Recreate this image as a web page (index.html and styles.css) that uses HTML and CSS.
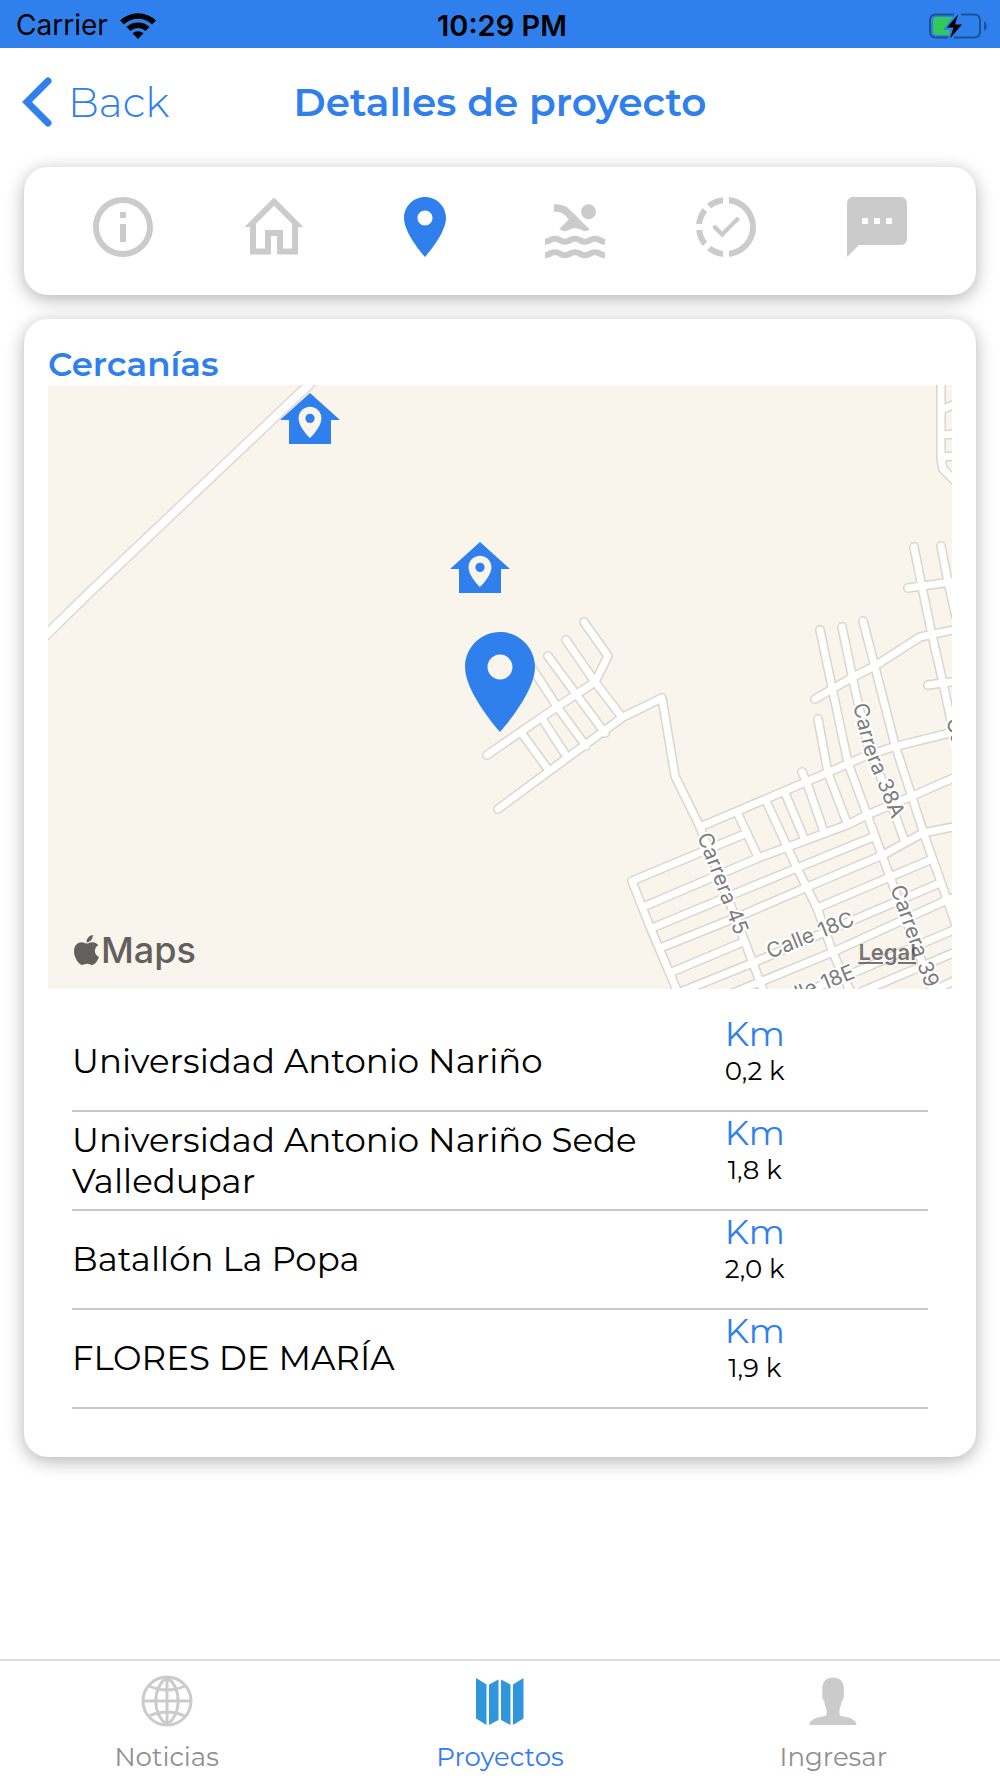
FILE: index.html
```html
<!DOCTYPE html>
<html lang="es">
<head>
<meta charset="utf-8">
<meta name="viewport" content="width=device-width, initial-scale=1">
<title>Detalles de proyecto</title>
<link rel="stylesheet" href="styles.css">
</head>
<body>
<div class="status">
  <div class="status-carrier">
    <span>Carrier</span>
    <svg width="36" height="28" viewBox="0 0 36 28" aria-hidden="true">
      <path d="M0 8.500A26 26 0 0 1 36 8.500L32 12.500A20 20 0 0 0 4 12.500Z"/>
      <path d="M6.500 15A17 17 0 0 1 29.500 15L25.500 19A11 11 0 0 0 10.500 19Z"/>
      <path d="M12.500 21.300A8.500 8.500 0 0 1 23.500 21.300L18 27Z"/>
    </svg>
  </div>
  <time class="status-time">10:29 PM</time>
  <svg class="status-battery" width="60" height="28" viewBox="0 0 60 28" aria-hidden="true">
    <path class="battery-shell" d="M26 2.500H8Q2 2.500 2 8.500V19.500Q2 25.500 8 25.500H20M33 2.500H46Q52 2.500 52 8.500V19.500Q52 25.500 46 25.500H26"/>
    <path class="battery-shell-fill" d="M56 9Q59 11 59 14T56 19Z"/>
    <path class="battery-level" d="M9 5H25L15 18H22L21 23H9Q5 23 5 19V9Q5 5 9 5Z"/>
    <path d="M30 2.500L19 15.500H25.500L22 26.500L34 12.500H27Z"/>
  </svg>
</div>

<header class="header">
  <button class="back" type="button">
    <svg width="30" height="50" viewBox="0 0 30 50" aria-hidden="true"><path d="M26 4L5 25L26 46"/></svg>
    <span>Back</span>
  </button>
  <h1 class="title">Detalles de proyecto</h1>
</header>

<main class="content">
  <nav class="card sections" aria-label="Secciones">
    <button class="section" type="button" aria-label="Información">
      <svg viewBox="0 0 24 24"><path d="M11 7h2v2h-2zm0 4h2v6h-2zm1-9C6.480 2 2 6.480 2 12s4.480 10 10 10 10-4.480 10-10S17.520 2 12 2zm0 18c-4.410 0-8-3.590-8-8s3.590-8 8-8 8 3.590 8 8-3.590 8-8 8z"/></svg>
    </button>
    <button class="section" type="button" aria-label="Vivienda">
      <svg viewBox="0 0 24 24"><path fill-rule="evenodd" d="M12 2.200L21.800 12H20V21.200H13V15H11V21.200H4V12H2.200ZM9 19.200V13H15V19.200H18V10.900L12 4.900L6 10.900V19.200Z"/></svg>
    </button>
    <button class="section is-active" type="button" aria-label="Ubicación">
      <svg viewBox="0 0 24 24"><path d="M12 2C8.130 2 5 5.130 5 9c0 5.250 7 13 7 13s7-7.750 7-13c0-3.870-3.130-7-7-7zm0 9.500c-1.380 0-2.500-1.120-2.500-2.500s1.120-2.500 2.500-2.500 2.500 1.120 2.500 2.500-1.120 2.500-2.500 2.500z"/></svg>
    </button>
    <button class="section" type="button" aria-label="Zonas comunes">
      <svg viewBox="0 0 24 24"><g transform="translate(0 1.400)"><path d="M22 21c-1.110 0-1.730-.37-2.180-.64-.37-.22-.6-.36-1.150-.36-.56 0-.78.13-1.150.36-.46.27-1.070.64-2.180.64s-1.730-.37-2.180-.64c-.37-.22-.6-.36-1.150-.36-.56 0-.78.13-1.150.36-.46.27-1.080.64-2.190.64-1.110 0-1.730-.37-2.180-.64-.37-.23-.6-.36-1.150-.36s-.78.13-1.150.36c-.46.27-1.080.64-2.190.64v-2c.56 0 .78-.13 1.150-.36.46-.27 1.080-.64 2.190-.64s1.730.37 2.180.64c.37.23.59.36 1.150.36.56 0 .78-.13 1.150-.36.46-.27 1.080-.64 2.190-.64 1.110 0 1.730.37 2.180.64.37.22.6.36 1.150.36s.78-.13 1.150-.36c.45-.27 1.070-.64 2.180-.64s1.730.37 2.180.64c.37.23.59.36 1.150.36v2zm0-4.500c-1.110 0-1.730-.37-2.180-.64-.37-.22-.6-.36-1.150-.36-.56 0-.78.13-1.150.36-.45.27-1.070.64-2.180.64s-1.730-.37-2.180-.64c-.37-.22-.6-.36-1.150-.36-.56 0-.78.13-1.150.36-.45.27-1.070.64-2.180.64s-1.730-.37-2.180-.64c-.37-.22-.6-.36-1.150-.36s-.78.13-1.150.36c-.47.27-1.090.64-2.200.64v-2c.56 0 .78-.13 1.150-.36.45-.27 1.070-.64 2.180-.64s1.730.37 2.180.64c.37.22.6.36 1.150.36.56 0 .78-.13 1.150-.36.45-.27 1.070-.64 2.180-.64s1.730.37 2.180.64c.37.22.6.36 1.150.36s.78-.13 1.150-.36c.45-.27 1.070-.64 2.180-.64s1.730.37 2.180.64c.37.22.6.36 1.150.36v2zM8.670 12c.56 0 .78-.13 1.150-.36.46-.27 1.080-.64 2.190-.64 1.110 0 1.730.37 2.180.64.37.22.6.36 1.150.36s.78-.13 1.150-.36c.12-.07.26-.15.41-.23L10.480 5C8.930 3.450 7.500 2.990 5 3v2.500c1.820-.01 2.890.39 4 1.500l1 1-3.250 3.250c.31.12.56.27.77.39.37.23.59.36 1.150.36z"/><circle cx="16.500" cy="5.500" r="2.500"/></g></svg>
    </button>
    <button class="section" type="button" aria-label="Avance">
      <svg viewBox="0 0 24 24"><path d="M13 2.030V4.050C17.390 4.590 20.500 8.580 19.960 12.970C19.500 16.610 16.640 19.500 13 19.930V21.930C18.500 21.380 22.500 16.500 21.950 11C21.500 6.250 17.730 2.500 13 2.030M11 2.060C9.050 2.250 7.190 3 5.670 4.260L7.100 5.740C8.220 4.840 9.570 4.260 11 4.060V2.060M4.260 5.670C3 7.190 2.250 9.040 2.050 11H4.050C4.240 9.580 4.800 8.230 5.690 7.100L4.260 5.670M2.060 13C2.260 14.960 3.030 16.810 4.270 18.330L5.690 16.900C4.810 15.770 4.240 14.420 4.060 13H2.060M7.100 18.370L5.670 19.740C7.180 21 9.040 21.790 11 22V20C9.580 19.820 8.230 19.250 7.100 18.370Z"/><path class="tick" d="M7.900 11.700L10.700 14.500L16.200 9"/></svg>
    </button>
    <button class="section" type="button" aria-label="Mensajes">
      <svg viewBox="0 0 24 24"><path d="M20 2H4c-1.100 0-1.990.9-1.990 2L2 22l4-4h14c1.100 0 2-.9 2-2V4c0-1.100-.9-2-2-2zM9 11H7V9h2v2zm4 0h-2V9h2v2zm4 0h-2V9h2v2z"/></svg>
    </button>
  </nav>

  <section class="card nearby">
    <h2 class="nearby-title">Cercanías</h2>
    <div class="map">
      <svg class="map-canvas" viewBox="0 0 904 604" role="img" aria-label="Mapa del proyecto">
        <defs>
          <path id="highway" d="M-6 254L42 207L268 -7"/>
          <g id="streets">
            <path d="M439 370L509 322L547 297L560 271L536 237"/>
            <path d="M450 424L500 387L575 332L614 313L627 391L652 442L695 552L717 610"/>
            <path d="M518 255L547 297L573 331M500 271L528 309L557 348M480 277L510 323L538 361M495 335L519 372M475 350L499 383"/>
            <path d="M652 442L779 388L815 372L845 362L910 346"/>
            <path d="M699 448L584 496L602 542L631 610"/>
            <path d="M689 427L710 472M719 418L749 483L769 523L785 568L804 610M737 408L756 453M754 387L759 398L776 447M770 334L780 388L799 438"/>
            <path d="M595 522L710 473L799 440L819 430L862 412L910 391"/>
            <path d="M604 543L749 483L825 452"/>
            <path d="M612 563L692 531L757 503L835 470L875 448L910 441"/>
            <path d="M624 587L695 557M769 523L882 475M630 608L707 577L892 498M675 612L712 597L785 567L899 515L910 511M749 610L805 588L910 543M815 606L910 566M885 606L910 594"/>
            <path d="M772 245L785 307L800 378L820 432L842 492L887 612"/>
            <path d="M794 242L805 295L819 358L839 408L857 457"/>
            <path d="M815 236L827 282L847 360L864 412L877 452L908 540"/>
            <path d="M767 314L805 292L827 281L872 252L910 244"/>
            <path d="M866 162L874 202L884 250L895 298L906 350M893 161L900 197L908 232M860 203L910 196M880 300L910 296"/>
            <path d="M893 -8V73L895 84L910 99M893 25L910 18M893 50L910 49M893 72L910 71"/>
          </g>
          <path id="house-marker" fill-rule="evenodd" d="M12 3L2 12H5V20H19V12H22ZM12 7.600C14.100 7.600 15.800 9.300 15.800 11.400C15.800 14.400 12 18 12 18S8.200 14.400 8.200 11.400C8.200 9.300 9.900 7.600 12 7.600ZM12 9.900A1.550 1.550 0 1 0 12 13A1.550 1.550 0 1 0 12 9.900Z"/>
          <path id="label-38a" d="M805 320L816 366L856 464"/>
          <path id="label-39" d="M842 503L859 551L890 638"/>
        </defs>
        <use href="#highway" class="highway-edge"/>
        <use href="#highway" class="highway"/>
        <use href="#streets" class="street-edge"/>
        <use href="#streets" class="street"/>
        <g class="map-label">
          <text><textPath href="#label-38a">Carrera 38A</textPath></text>
          <text><textPath href="#label-39">Carrera 39</textPath></text>
          <text transform="translate(649 451) rotate(69)">Carrera 45</text>
          <text transform="translate(722 574) rotate(-22)">Calle 18C</text>
          <text transform="translate(725 626) rotate(-22)">Calle 18E</text>
          <text transform="translate(898 335) rotate(75)">Carrera 37</text>
        </g>
        <g class="markers">
          <use href="#house-marker" transform="translate(226 -1) scale(3)"/>
          <use href="#house-marker" transform="translate(396 148) scale(3)"/>
          <path transform="translate(392 237) scale(5)" d="M12 2C8.130 2 5 5.130 5 9c0 5.250 7 13 7 13s7-7.750 7-13c0-3.870-3.130-7-7-7zm0 9.500c-1.380 0-2.500-1.120-2.500-2.500s1.120-2.500 2.500-2.500 2.500 1.120 2.500 2.500-1.120 2.500-2.500 2.500z"/>
        </g>
      </svg>
      <div class="map-brand">
        <svg width="25" height="30" viewBox="4 32 376 448" aria-hidden="true"><path d="M318.700 268.700c-.2-36.700 16.400-64.400 50-84.800-18.800-26.900-47.200-41.700-84.700-44.600-35.500-2.800-74.300 20.700-88.500 20.700-15 0-49.400-19.700-76.400-19.700C63.300 141.200 4 184.800 4 273.500q0 39.300 14.400 81.200c12.800 36.700 59 126.700 107.200 125.200 25.200-.6 43-17.900 75.800-17.900 31.800 0 48.300 17.900 76.400 17.900 48.600-.7 90.400-82.500 102.600-119.300-65.200-30.700-61.700-90-61.700-91.900zm-56.600-164.200c27.300-32.400 24.800-61.900 24-72.500-24.100 1.400-52 16.400-67.900 34.900-17.500 19.800-27.800 44.300-25.600 71.900 26.100 2 49.900-11.400 69.500-34.300z"/></svg>
        <span>Maps</span>
      </div>
      <a class="map-legal" href="#legal">Legal</a>
    </div>
    <div class="places-wrap">
      <table class="places">
        <tbody>
          <tr><th scope="row">Universidad Antonio Nariño</th><td><span class="unit">Km</span><span class="distance">0,2 k</span></td></tr>
          <tr><th scope="row">Universidad Antonio Nariño Sede Valledupar</th><td><span class="unit">Km</span><span class="distance">1,8 k</span></td></tr>
          <tr><th scope="row">Batallón La Popa</th><td><span class="unit">Km</span><span class="distance">2,0 k</span></td></tr>
          <tr><th scope="row">FLORES DE MARÍA</th><td><span class="unit">Km</span><span class="distance">1,9 k</span></td></tr>
        </tbody>
      </table>
    </div>
  </section>
</main>

<nav class="tabs" aria-label="Principal">
  <a class="tab" href="#noticias">
    <svg class="tab-globe" viewBox="0 0 52 52" aria-hidden="true"><circle cx="26" cy="26" r="24"/><path d="M26 2V50M2 26H50M26 2C11 14 11 38 26 50M26 2C41 14 41 38 26 50M8 11Q26 19 44 11M8 41Q26 33 44 41"/></svg>
    <span>Noticias</span>
  </a>
  <a class="tab is-current" href="#proyectos" aria-current="page">
    <svg class="tab-map" viewBox="0 0 52 52" aria-hidden="true"><path d="M2 3L12.500 9.500V50L2 43.500ZM15 9.500L24.500 4.500V45L15 50ZM27 4.500L36.500 9.500V50L27 45ZM39 9.500L49.500 3V43.500L39 50Z"/></svg>
    <span>Proyectos</span>
  </a>
  <a class="tab" href="#ingresar">
    <svg class="tab-person" viewBox="0 0 52 52" aria-hidden="true"><path d="M2.500 50C2.500 46 7 43 13 42C17 41.400 19.500 41 19.500 39V34C18.500 32 17.500 29 17.300 26C15.500 25 14.800 20.500 15.600 18.500C14 8 18 2.500 26 2.500S38 8 36.700 18.500C37.500 20.500 36.500 25 34.700 26C34.500 29 33.500 32 32.500 34V39C32.500 41 35 41.400 39 42C45 43 49.500 46 49.500 50Z"/></svg>
    <span>Ingresar</span>
  </a>
</nav>
</body>
</html>
```
FILE: styles.css
```css
:root {
  --blue: #2f80ed;
  --grey: #cbcbcb;
}

* {
  box-sizing: border-box;
}

body {
  margin: 0;
  min-height: 100vh;
  display: flex;
  flex-direction: column;
  background: #fff;
  color: #000;
  font-family: Montserrat, Inter, "Open Sans", sans-serif;
}

button {
  margin: 0;
  padding: 0;
  border: 0;
  background: none;
  font: inherit;
  color: inherit;
}

svg {
  display: block;
}

.status {
  display: grid;
  grid-template-columns: 1fr auto 1fr;
  align-items: center;
  height: 48px;
  padding: 3px 12px 0 16px;
  background: var(--blue);
  font-family: Inter, "Liberation Sans", sans-serif;
  font-size: 28px;
  line-height: 45px;
}

.status-carrier {
  display: flex;
  align-items: center;
  gap: 12px;
}

.status-time {
  font-size: 29px;
  font-weight: 600;
}

.status-battery {
  justify-self: end;
}

.battery-shell {
  fill: none;
  stroke: #1d5094;
  stroke-width: 2;
}

.battery-shell-fill {
  fill: #1d5094;
}

.battery-level {
  fill: #34c759;
}

.header {
  display: grid;
  grid-template-columns: 1fr auto 1fr;
  align-items: center;
  height: 107px;
  padding: 0 22px;
  color: var(--blue);
}

.back {
  display: flex;
  align-items: center;
  gap: 16px;
  font-size: 41px;
  font-weight: 300;
}

.back path {
  fill: none;
  stroke: currentColor;
  stroke-width: 7;
  stroke-linecap: round;
}

.title {
  margin: 0;
  font-size: 39px;
  font-weight: 600;
}

.content {
  display: flex;
  flex-direction: column;
  gap: 24px;
  padding: 12px 24px 24px;
}

.card {
  border-radius: 24px;
  background: #fff;
  box-shadow: 0 4px 18px rgba(0, 0, 0, 0.3);
}

.sections {
  display: flex;
  padding: 24px 24px 32px;
  color: var(--grey);
}

.section {
  flex: 1;
  display: flex;
  justify-content: center;
}

.section.is-active {
  color: var(--blue);
}

.section svg {
  width: 72px;
  height: 72px;
  fill: currentColor;
}

.section .tick {
  fill: none;
  stroke: currentColor;
  stroke-width: 1.4;
}

.nearby {
  padding: 24px;
}

.nearby-title {
  margin: 0;
  font-size: 34px;
  font-weight: 600;
  line-height: 42px;
  color: var(--blue);
}

.map {
  position: relative;
  background: #f9f5ed;
}

.map-canvas {
  width: 100%;
  height: auto;
}

.highway-edge,
.highway,
.street-edge,
.street {
  fill: none;
  stroke-linecap: round;
  stroke-linejoin: round;
}

.highway-edge {
  stroke: #dfd9d0;
  stroke-width: 11;
}

.highway {
  stroke: #fff;
  stroke-width: 8;
}

.street-edge {
  stroke: #dbd5cb;
  stroke-width: 10;
}

.street {
  stroke: #fff;
  stroke-width: 7;
}

.map-label {
  font-family: Inter, "Liberation Sans", sans-serif;
  font-size: 21px;
  fill: #7c7c7c;
  stroke: #fff;
  stroke-width: 4;
  stroke-linejoin: round;
  paint-order: stroke;
}

.markers {
  fill: var(--blue);
}

.map-brand {
  position: absolute;
  left: 26px;
  bottom: 17px;
  display: flex;
  align-items: center;
  gap: 2px;
  font-family: Inter, "Liberation Sans", sans-serif;
  font-size: 36px;
  font-weight: 500;
  line-height: 44px;
  color: #62605c;
}

.map-brand svg {
  fill: currentColor;
}

.map-legal {
  position: absolute;
  right: 36px;
  bottom: 25px;
  font-family: Inter, "Liberation Sans", sans-serif;
  font-size: 22px;
  font-weight: 600;
  line-height: 24px;
  color: rgba(60, 60, 60, 0.7);
}

.places-wrap {
  padding: 24px;
}

.places {
  width: 100%;
  table-layout: fixed;
  border-spacing: 0;
}

.places th,
.places td {
  height: 99px;
  padding: 0;
  border-bottom: 2px solid #c8c8c8;
}

.places th {
  width: 67%;
  font-size: 34px;
  font-weight: 400;
  line-height: 41px;
  text-align: left;
}

.places td {
  padding-right: 64px;
  text-align: center;
  vertical-align: top;
}

.unit,
.distance {
  display: block;
}

.unit {
  font-size: 34px;
  line-height: 42px;
  color: var(--blue);
}

.distance {
  font-size: 26px;
  line-height: 33px;
}

.tabs {
  display: flex;
  margin-top: auto;
  border-top: 2px solid #dedede;
}

.tab {
  flex: 1;
  display: flex;
  flex-direction: column;
  align-items: center;
  gap: 14px;
  padding: 14px 0 4px;
  font-size: 26px;
  line-height: 33px;
  color: #8f8f8f;
  text-decoration: none;
}

.tab.is-current {
  color: #347af6;
}

.tab svg {
  width: 52px;
  height: 52px;
}

.tab-globe {
  fill: none;
  stroke: var(--grey);
  stroke-width: 3;
}

.tab-map {
  fill: #3096dc;
}

.tab-person {
  fill: var(--grey);
}
```
